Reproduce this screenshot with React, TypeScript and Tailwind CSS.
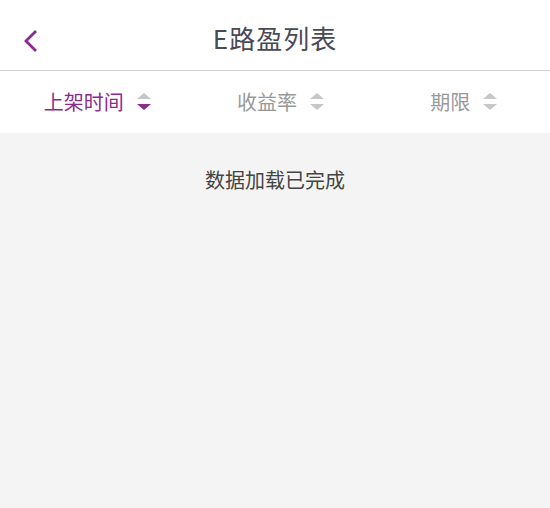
import React from "react";

const font = { fontFamily: '"Noto Sans CJK SC", "Noto Sans", sans-serif' };

const SortIcon = ({ active }: { active?: boolean }) => (
	<svg width="16" height="20" viewBox="0 0 16 20" className="ml-3">
		<polygon points="1,7 8,1 15,7" fill="#c7c7c7" />
		<polygon points="1,12 8,18 15,12" fill={active ? "#8b2a8f" : "#c7c7c7"} />
	</svg>
);

const columns = [
	{ label: "上架时间", active: true },
	{ label: "收益率", active: false },
	{ label: "期限", active: false },
];

export default function App() {
	return (
		<div className="w-[550px] h-[508px] flex flex-col bg-[#f4f4f4]" style={font}>
			<div className="h-[71px] bg-white border-b border-[#cfcfcf] flex items-center relative">
				<button className="absolute left-[22px] top-[28px]">
					<svg width="18" height="26" viewBox="0 0 18 26">
						<polyline points="14,3 4,13 14,23" fill="none" stroke="#8b2a8f" strokeWidth="2.8" />
					</svg>
				</button>
				<h1 className="flex-1 text-center text-[26px] text-[#4a4a57] tracking-[1px] pt-[4px]">E路盈列表</h1>
			</div>
			<div className="h-[62px] bg-white grid grid-cols-3">
				{columns.map((c) => (
					<div key={c.label} className="flex items-center justify-center pl-[12px]">
						<span className={`text-[20px] ${c.active ? "text-[#8b2a8f]" : "text-[#999999]"}`}>{c.label}</span>
						<SortIcon active={c.active} />
					</div>
				))}
			</div>
			<div className="pt-[32px] text-center text-[20px] text-[#444444]">数据加载已完成</div>
		</div>
	);
}
